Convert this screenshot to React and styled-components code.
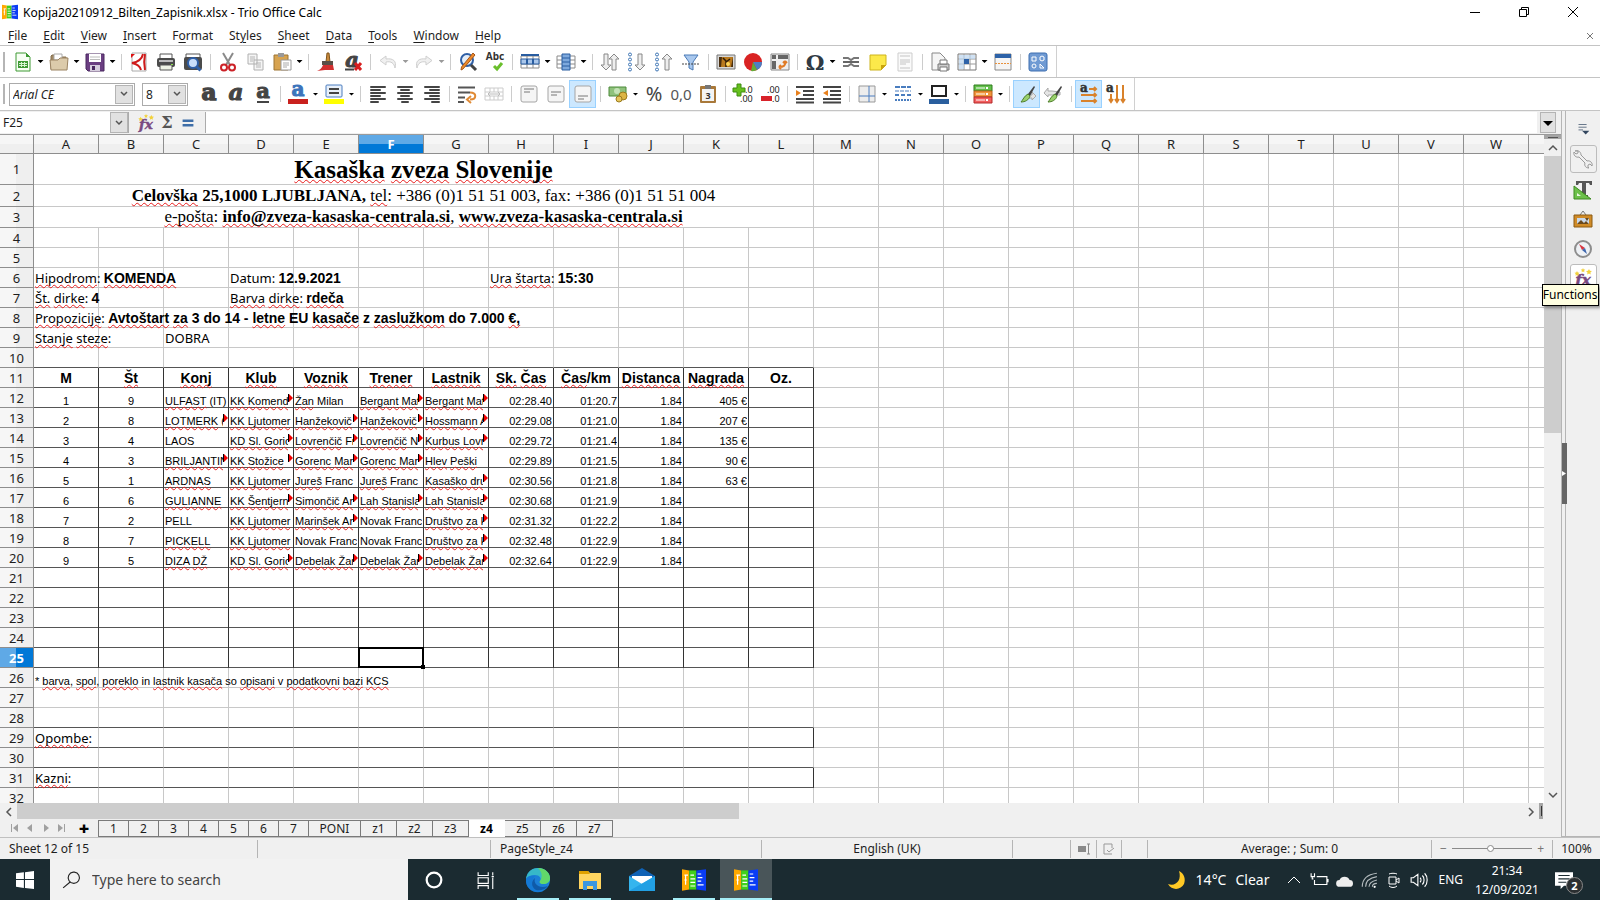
/* eslint-disable react/prop-types */
import { Fragment } from "react";
import styled, { createGlobalStyle, css } from "styled-components";

const GlobalStyle = createGlobalStyle`
  * {
    box-sizing: border-box;
  }

  body {
    margin: 0;
    font-family: "Noto Sans", "Open Sans", sans-serif;
    font-size: 12px;
    color: #1e1e1e;
    background: #fff;
  }

  button,
  input {
    margin: 0;
    padding: 0;
    border: 0;
    border-radius: 0;
    background: none;
    font: inherit;
    color: inherit;
    outline: none;
  }
`;

/* ---------- icons ---------- */

const Svg = styled.svg`
  display: block;
  flex: none;
  overflow: visible;
  width: ${(p) => p.$size || 20}px;
  height: ${(p) => p.$size || 20}px;
`;

const sheetLines = (
  <path d="M1 4h18M1 8h18M1 12h18M1 16h18M1 4v12M7 4v12M13 4v12M19 4v12" stroke="#8b8b8b" fill="none" />
);

const stripes = (widths, x = () => 2, color = "#444") =>
  widths.map((w, i) => (
    <rect key={i} x={x(w)} y={2 + i * 3} width={w} height="2" rx="1" fill={color} />
  ));

const glyph = (text, props) => (
  <text x="10" y="16" textAnchor="middle" fill="#444" fontFamily="DejaVu Serif, serif" fontWeight="bold" fontSize="18" {...props}>
    {text}
  </text>
);

const fx = (
  <>
    <text x="10" y="17" textAnchor="middle" fill="#7a4a80" stroke="#7a4a80" strokeWidth=".5" fontFamily="DejaVu Serif, serif" fontStyle="italic" fontWeight="bold" fontSize="15">
      fx
    </text>
    <path d="M4 3l.8 1.600 1.700.2-1.200 1.200.2 1.700L4 7l-1.500.7.2-1.700L1.500 4.800l1.700-.2zM10 0l.7 1.400 1.600.2-1.200 1.100.3 1.600L10 3.500l-1.400.8.3-1.600-1.200-1.100 1.600-.2zM16 1l.9 1.800 2 .3-1.500 1.400.3 2-1.700-1-1.800 1 .3-2L13 3.100l2-.3z" fill="#f2d13c" />
  </>
);

const paintbrush = (
  <>
    <path d="M17 2l-6 8 2 2 5-9z" fill="#444" />
    <path d="M11 10l2 2c-1 4-5 6-9 6 2-2 3-6 7-8z" fill="#9ad06c" stroke="#4e7d2c" />
  </>
);

const vAlign = (y) => (
  <>
    <rect x="2" y="2" width="16" height="16" rx="2" fill="#f5f5f5" stroke="#a5a5a5" />
    <path d={`M5 ${y}h10M5 ${y + 3}h6`} stroke="#777" />
  </>
);

const upArrow = (x) => (
  <path d={`M${x} 2l5 5h-3v11h-4V7h-3z`} fill="#eee" stroke="#888" />
);
const downArrow = (x) => (
  <path d={`M${x} 18l5-5h-3V2h-4v11h-3z`} fill="#eee" stroke="#888" />
);
const dots = [3, 8, 13, 18].map((y) => (
  <circle key={y} cx="3" cy={y - 0.5} r="1.500" fill="#fff" stroke="#3d74b4" />
));

const icons = {
  newDoc: (
    <>
      <path d="M3 1h10l4 4v14H3z" fill="#f7fff4" stroke="#3f9a35" />
      <path d="M13 1v4h4z" fill="#3f9a35" />
      <path d="M5 9h10v7H5z" fill="#3f9a35" />
      <path d="M6 11.500h8M6 13.500h8M8.500 10v5M11.500 10v5" stroke="#d9f5d2" />
    </>
  ),
  open: (
    <>
      <path d="M2 17V4l1-1h5l2 2h7v4" fill="#a28a66" stroke="#86704f" />
      <path d="M5 2h8v6H5z" fill="#fff" stroke="#aaa" />
      <path d="M1 8h8l2-2h8l-1 12H2z" fill="#dccbab" stroke="#9b8463" />
    </>
  ),
  save: (
    <>
      <path d="M1 2h18v17H3l-2-2z" fill="#6b3f82" stroke="#4a2860" />
      <path d="M4 2h12v8H4z" fill="#fff" />
      <path d="M5 5h10M5 7.500h10" stroke="#bbb" />
      <path d="M5 13h10v6H5z" fill="#d7cede" />
      <path d="M7 14h3v4H7z" fill="#4a2860" />
    </>
  ),
  pdf: (
    <>
      <path d="M3 1h14v18H3z" fill="#fff" stroke="#aaa" />
      <path d="M2 2h4L2 6z" fill="#d11" />
      <path d="M14 2c-1 5-5 8-11 9 5 1 8 3 9 7" fill="none" stroke="#cf1b1b" strokeWidth="2" />
      <path d="M16 2c-1 5-1 11 0 16" fill="none" stroke="#cf1b1b" strokeWidth="2" />
    </>
  ),
  print: (
    <>
      <path d="M4 2h12v6H4z" fill="#fff" stroke="#555" />
      <rect x="1" y="6" width="18" height="9" rx="2" fill="#4b4b4b" />
      <path d="M3 9h14" stroke="#bbb" strokeWidth="2" />
      <path d="M4 13h12v5H4z" fill="#eef3e4" stroke="#555" />
      <path d="M15 12h2v1h-2z" fill="#8ce04a" />
    </>
  ),
  preview: (
    <>
      <path d="M3 2h14v5H3z" fill="#fff" stroke="#555" />
      <rect x="1" y="5" width="18" height="13" rx="2" fill="#4b4b4b" />
      <circle cx="10" cy="11" r="5" fill="#c9defa" stroke="#2e5fa8" strokeWidth="2" />
      <path d="M13.500 14.500l4 4" stroke="#2e5fa8" strokeWidth="3" />
    </>
  ),
  cut: (
    <>
      <path d="M5 1l7 12M15 1L8 13" stroke="#8a8a8a" strokeWidth="2" />
      <circle cx="6" cy="15.500" r="3" fill="none" stroke="#cc2127" strokeWidth="2" />
      <circle cx="14" cy="15.500" r="3" fill="none" stroke="#cc2127" strokeWidth="2" />
    </>
  ),
  copy: (
    <>
      <path d="M3 2h9v10H3zM9 8h9v10H9z" fill="#f5f5f5" stroke="#b0b0b0" />
      <path d="M5 5h5M5 7h5M5 9h3M11 11h5M11 13h5M11 15h5" stroke="#b5b5b5" />
    </>
  ),
  paste: (
    <>
      <path d="M2 3h14v15H2z" fill="#d7a350" stroke="#9d7433" />
      <path d="M6 1h6v4H6z" fill="#999" />
      <path d="M9 8h10v10H9z" fill="#fff" stroke="#999" />
      <path d="M11 11h6M11 13h6M11 15h4" stroke="#aaa" />
    </>
  ),
  brush: (
    <>
      <path d="M11 1h2l1 9h-4z" fill="#c98a3c" stroke="#80551c" />
      <path d="M6 9h11v4H6z" fill="#5a5048" />
      <path d="M7 13h10l1 5H9L1 19c3-1 5-3 6-6z" fill="#d23030" />
    </>
  ),
  clearFmt: (
    <>
      <text x="9" y="15" textAnchor="middle" fill="#444" stroke="#444" fontFamily="DejaVu Serif, serif" fontStyle="italic" fontWeight="bold" fontSize="21">
        a
      </text>
      <path d="M2 17.500h9" stroke="#444" strokeWidth="2" />
      <path d="M12 11l6 7M18 11l-6 7" stroke="#d81f1f" strokeWidth="3" />
    </>
  ),
  undo: <path d="M8 4L2 8.500l6 4.500v-3c5-1 8 1 9 6 2-7-2-10-9-9z" fill="#f0f0f0" stroke="#cfcfcf" />,
  redo: <path d="M12 4l6 4.500L12 13v-3c-5-1-8 1-9 6-2-7 2-10 9-9z" fill="#f0f0f0" stroke="#cfcfcf" />,
  find: (
    <>
      <circle cx="9" cy="8" r="6" fill="#e3edf9" stroke="#2f5fa5" strokeWidth="2" />
      <path d="M13 13l5 5" stroke="#444" strokeWidth="3" />
      <path d="M17 3L5 17l-2 1 .5-3L15 1z" fill="#ee8a2a" stroke="#a5561a" />
    </>
  ),
  spell: (
    <>
      <text x="10" y="8" textAnchor="middle" fill="#333" fontWeight="bold" fontSize="10" fontFamily="Noto Sans, sans-serif">
        Abc
      </text>
      <path d="M9 14l3 3 5-6" fill="none" stroke="#6abf2c" strokeWidth="3" />
    </>
  ),
  row: (
    <>
      {sheetLines}
      <path d="M1 7h18v5H1z" fill="#a9c6ea" stroke="#285ca0" />
      <path d="M7 7v5M13 7v5M1 3h18" stroke="#285ca0" strokeWidth="2" />
    </>
  ),
  column: (
    <>
      {sheetLines}
      <path d="M6 2h8v16H6z" fill="#7ea9dd" stroke="#285ca0" />
      <path d="M6 6h8M6 10h8M6 14h8" stroke="#285ca0" />
    </>
  ),
  sort: (
    <>
      {downArrow(6)}
      {upArrow(14)}
    </>
  ),
  sortAsc: (
    <>
      {dots}
      {downArrow(13)}
    </>
  ),
  sortDesc: (
    <>
      {dots}
      {upArrow(13)}
    </>
  ),
  filter: (
    <>
      <path d="M3 3h14l-5 7v8l-4-2v-6z" fill="#a9c8ee" stroke="#4a7ab6" />
      <path d="M1 12h18" stroke="#444" strokeDasharray="2 1" />
    </>
  ),
  image: (
    <>
      <path d="M1 3h18v14H1z" fill="#d8d8d8" stroke="#777" />
      <path d="M3 5h14v10H3z" fill="#b97a1f" />
      <path d="M3 5h3l-1 10H3zM17 5v10h-2z" fill="#4a2f10" />
      <path d="M10 15V9L7 6M10 10l4-3" stroke="#2e1c08" strokeWidth="1.500" fill="none" />
      <circle cx="12" cy="12" r="2" fill="#ffd85c" />
    </>
  ),
  chart: (
    <>
      <circle cx="10" cy="10" r="9" fill="#d92323" />
      <path d="M10 10h9a9 9 0 0 1-5 8z" fill="#4c7fc4" />
      <path d="M10 10l4 8a9 9 0 0 1-6 1z" fill="#63ad38" />
    </>
  ),
  pivot: (
    <>
      <path d="M1 2h18v16H1z" fill="#efefef" stroke="#888" />
      <path d="M2 3h4v4H2zM8 3h10v4H8zM2 9h4v8H2z" fill="#666" />
      <path d="M15 9c1 5-2 6-6 6M15 9l-2 2M15 9l2 2M9 15l2-2M9 15l2 2" fill="none" stroke="#e07b26" strokeWidth="2" />
    </>
  ),
  omega: glyph("Ω", { fontSize: 21, y: 18, fill: "#2f3a44" }),
  link: (
    <>
      <path d="M2 6h5l3 2 3-2h5M2 14h5l3-2 3 2h5" stroke="#777" strokeWidth="2" fill="none" />
      <path d="M2 10h16" stroke="#666" strokeWidth="2" />
    </>
  ),
  note: (
    <>
      <path d="M2 3h16v10l-5 5H2z" fill="#fce94a" stroke="#cdb41c" />
      <path d="M18 13h-5v5z" fill="#c9a40e" />
    </>
  ),
  header: (
    <>
      <path d="M3 1h14v18H3z" fill="#fafafa" stroke="#cdcdcd" />
      <path d="M5 4h10M5 8h10M5 10h10M5 12h6M5 16h10" stroke="#c4c4c4" />
    </>
  ),
  printArea: (
    <>
      <path d="M2 1h8l5 5v12H2z" fill="#f5f5f5" stroke="#888" />
      <path d="M8 12h11v6H8z" fill="#ccc" stroke="#777" />
      <path d="M10 8h7v4h-7zM10 15h7v4h-7z" fill="#fff" stroke="#777" />
    </>
  ),
  freeze: (
    <>
      <path d="M1 2h18v16H1z" fill="#fff" stroke="#777" />
      <path d="M1 7h18M1 12h18M7 2v16M13 2v16" stroke="#999" />
      <path d="M2 3h16v4H7v10H2z" fill="#bcd5f0" fillOpacity=".7" />
      <path d="M7 7h5v5H7z" fill="#2d62a8" />
    </>
  ),
  split: (
    <>
      <path d="M2 2h16v16H2z" fill="#f5f5f5" stroke="#888" />
      <path d="M2 2h16v4H2z" fill="#2d62a8" />
      <path d="M2 11.500h16" stroke="#e8913c" strokeDasharray="2 1" />
    </>
  ),
  draw: (
    <>
      <rect x="1" y="1" width="18" height="18" rx="2" fill="#6f9ad3" stroke="#3e6fb0" />
      <path d="M4 5h4v4H4zM12 5l2-1 2 1v3l-2 1-2-1zM12 12v4h4z" fill="none" stroke="#fff" />
      <circle cx="6" cy="14" r="2" fill="none" stroke="#fff" />
    </>
  ),
  bold: glyph("a", { fontSize: 23, y: 16, stroke: "#444", strokeWidth: 1.5 }),
  italic: glyph("a", { fontSize: 23, y: 16, fontStyle: "italic", stroke: "#444" }),
  underline: (
    <>
      {glyph("a", { fontSize: 21, y: 14, stroke: "#444" })}
      <path d="M4 18h12" stroke="#444" strokeWidth="2" />
    </>
  ),
  fontColor: (
    <>
      {glyph("a", { fontSize: 20, y: 12, fill: "#3c74bb", stroke: "#3c74bb" })}
      <path d="M0 15h20v5H0z" fill="#c9211e" />
    </>
  ),
  highlight: (
    <>
      <rect x="2" y="1" width="16" height="12" rx="1" fill="#e8f0fa" stroke="#4a7dbf" />
      <path d="M5 5h10M5 9h10" stroke="#444" strokeWidth="2" />
      <path d="M0 15h20v5H0z" fill="#ffff00" />
    </>
  ),
  left: stripes([16, 11, 16, 11, 16, 9]),
  center: stripes([16, 10, 16, 10, 16, 8], (w) => 10 - w / 2),
  right: stripes([16, 11, 16, 11, 16, 9], (w) => 18 - w),
  wrap: (
    <>
      <path d="M1 3.500h17M1 8.500h12M1 13.500h7M1 18h6" stroke="#555" strokeWidth="2" />
      <path d="M13 8.500c7 0 7 7 0 7M14 12l-4 3.500 4 3.500" fill="none" stroke="#e08a35" strokeWidth="2" />
    </>
  ),
  merge: (
    <>
      <path d="M1 4h18v12H1zM1 8h18M1 12h18M6 4v4M10 4v4M14 4v4M6 12v4M10 12v4M14 12v4" fill="none" stroke="#ccc" />
      <path d="M4 10h12M6 8l-2 2 2 2M14 8l2 2-2 2" fill="none" stroke="#bbb" />
    </>
  ),
  top: vAlign(5),
  middle: vAlign(8),
  bottom: vAlign(12),
  currency: (
    <>
      <path d="M1 3h17v9H1z" fill="#8fc27c" stroke="#4d8a3a" />
      <circle cx="9" cy="7" r="3" fill="#c5e3b8" />
      <circle cx="15" cy="12" r="4" fill="#dcb544" stroke="#9b7b1d" />
      <circle cx="11" cy="15" r="3" fill="#e6c55c" stroke="#9b7b1d" />
    </>
  ),
  percent: glyph("%", { fontFamily: "Noto Sans, sans-serif", fontWeight: 400, fontSize: 20, y: 17 }),
  number: glyph("0,0", { fontFamily: "Noto Sans, sans-serif", fontWeight: 400, fontSize: 15, fill: "#555" }),
  date: (
    <>
      <rect x="2" y="2" width="16" height="17" rx="1" fill="#a9793a" />
      <path d="M4 5h12v12H4z" fill="#f4f4f4" />
      <path d="M7 1h6v4H7z" fill="#777" />
      <text x="10" y="15" textAnchor="middle" fontSize="9" fontWeight="bold" fill="#333" fontFamily="Noto Sans, sans-serif">
        3
      </text>
    </>
  ),
  addDec: (
    <>
      <path d="M4 0h4v4h4v4H8v4H4V8H0V4h4z" fill="#66c01e" stroke="#3f8c10" />
      <text x="12" y="9" fontSize="9" fill="#222" fontFamily="Noto Sans, sans-serif">.0</text>
      <text x="7" y="18" fontSize="9" fill="#222" fontFamily="Noto Sans, sans-serif">.00</text>
    </>
  ),
  delDec: (
    <>
      <text x="7" y="9" fontSize="9" fill="#222" fontFamily="Noto Sans, sans-serif">.00</text>
      <path d="M1 12h11v5H1z" fill="#d8222a" />
      <text x="12" y="18" fontSize="9" fill="#222" fontFamily="Noto Sans, sans-serif">.0</text>
    </>
  ),
  indentMore: (
    <>
      <path d="M1 3h18M8 7h11M8 11h11M1 15h18M1 18.500h18" stroke="#444" strokeWidth="2" />
      <path d="M1 6l5 3-5 3z" fill="#e8801c" />
    </>
  ),
  indentLess: (
    <>
      <path d="M1 3h18M8 7h11M8 11h11M1 15h18M1 18.500h18" stroke="#444" strokeWidth="2" />
      <path d="M6 6L1 9l5 3z" fill="#e8801c" />
    </>
  ),
  borders: (
    <>
      <path d="M2 2h16v16H2z" fill="#ededed" stroke="#999" />
      <path d="M12 2v16M2 12h16" stroke="#4a7dbf" />
    </>
  ),
  lineStyle: (
    <>
      <path d="M2 3h16" stroke="#4a7dbf" strokeWidth="2" strokeDasharray="5 1" />
      <path d="M2 7h16" stroke="#4a7dbf" strokeDasharray="4 1" />
      <path d="M2 11h16" stroke="#4a7dbf" strokeWidth="2" strokeDasharray="4 2" />
      <path d="M2 16h16" stroke="#4a7dbf" strokeWidth="2" strokeDasharray="2 1" />
    </>
  ),
  borderColor: (
    <>
      <path d="M3 2h14v10H3z" fill="#fff" stroke="#222" strokeWidth="2" />
      <path d="M0 15h20v5H0z" fill="#2a5f9e" />
    </>
  ),
  conditional: (
    <>
      <path d="M1 1h18v6H1z" fill="#63bf4b" stroke="#2f7c1d" />
      <path d="M1 7h18v6H1z" fill="#f0953a" stroke="#b9601a" />
      <path d="M1 13h18v6H1z" fill="#f25f5f" stroke="#b52b2b" />
      <path d="M3 4h9M3 10h9M3 16h9" stroke="#fff" />
      <path d="M14 3v2M14 9v2M14 15v2" stroke="#fff" strokeWidth="2" />
    </>
  ),
  styleBrush: (
    <>
      <path d="M10 11h5v-3l4 4-4 4v-2h-6z" fill="#e5e5e5" stroke="#aaa" />
      {paintbrush}
    </>
  ),
  styleBrush2: (
    <>
      <path d="M8 7H4V4L0 9l4 4v-2h12V8z" fill="#e5e5e5" stroke="#aaa" />
      {paintbrush}
    </>
  ),
  ltr: (
    <>
      <text x="1" y="8" fontSize="12" fontWeight="bold" fill="#333" stroke="#333" strokeWidth=".5" fontFamily="DejaVu Serif, serif">a</text>
      <path d="M10 5h7M2 11h15M2 17h15M15 3l2 2-2 2M15 9l2 2-2 2M15 15l2 2-2 2" fill="none" stroke="#d9822b" strokeWidth="2" />
    </>
  ),
  ttb: (
    <>
      <text x="0" y="8" fontSize="12" fontWeight="bold" fill="#333" stroke="#333" strokeWidth=".5" fontFamily="DejaVu Serif, serif">a</text>
      <path d="M5 10v8M11 1v17M17 1v17M3 15l2 3 2-3M9 15l2 3 2-3M15 15l2 3 2-3" fill="none" stroke="#d9822b" strokeWidth="2" />
    </>
  ),
  fx,
  sum: glyph("Σ", { fontSize: 18, fill: "#555" }),
  equals: <path d="M4 7.500h12M4 12.500h12" stroke="#3e6ea8" strokeWidth="3" />,
  menu: (
    <>
      <path d="M5 5h9M5 8h9M5 11h5" stroke="#5a6b80" />
      <path d="M9 12h8l-4 4z" fill="#33475f" />
    </>
  ),
  wrench: (
    <path
      d="M2 2c2-1 6 0 6 4l6 6c3-1 6 2 5 5l-2-2-2 1v2l1 1c-3 0-5-2-4-5L6 8C3 9 0 6 1 3l2 2 2-1V2z"
      fill="#f0f0f0"
      stroke="#9a9a9a"
    />
  ),
  text: (
    <>
      <path d="M3 1h16v4h-2l-1-2h-3v12h2v2H8v-2h1V3H6L5 5H3z" fill="#555" />
      <path d="M1 6v13h17z" fill="#6cc04a" stroke="#3c8a20" />
      <path d="M4 13v3h4z" fill="#eaf7e3" />
    </>
  ),
  gallery: (
    <>
      <path d="M7 5l3-4 3 4" fill="none" stroke="#777" />
      <path d="M1 5h18v12H1z" fill="#d08b27" stroke="#8a5a14" />
      <path d="M4 8h12v6H4z" fill="#c9d8ea" />
      <path d="M4 14l4-4 3 3 2-2 3 3zM12 8l2 3 2-3z" fill="#6b4a1e" />
    </>
  ),
  compass: (
    <>
      <circle cx="10" cy="10" r="8" fill="#eef1f5" stroke="#8d8d8d" strokeWidth="2" />
      <path d="M6 5l6 4-3 2z" fill="#d8343f" />
      <path d="M14 15l-5-4 3-2z" fill="#3e67ae" />
    </>
  ),
  trio: (
    <>
      <path d="M0 1l6 1v16l-6 1z" fill="#ffa800" />
      <path d="M6 2h6v16H6z" fill="#41d01c" />
      <path d="M12 2l8-1v18l-8-1z" fill="#0a3cf5" />
      <path d="M2 6h3M2 10h2M3 6v8M7 6h3M7 9h4M7 12h4M7 15h4M13 5h3M13 8h4M13 11h3M13 14h5" stroke="#fff" fill="none" />
    </>
  ),
};

function Icon({ name, size, title }) {
  return (
    <Svg $size={size} viewBox="0 0 20 20" role="img" aria-label={title || name}>
      {icons[name]}
    </Svg>
  );
}

/* ---------- window frame ---------- */

const Window = styled.div`
  display: flex;
  flex-direction: column;
  height: 100vh;
  overflow: hidden;
`;

const TitleBar = styled.header`
  display: flex;
  align-items: center;
  height: 24px;
  padding: 0 3px 0 2px;
`;

const Title = styled.h1`
  flex: 1;
  margin: 0 0 0 5px;
  font-size: 12px;
  font-weight: 400;
  color: #000;
`;

const WindowButton = styled.button`
  display: grid;
  place-items: center;
  width: 49px;
  height: 24px;
`;

const MenuBar = styled.nav`
  display: flex;
  align-items: center;
  gap: 16px;
  height: 22px;
  padding: 2px 5px 0 8px;
  border-bottom: 1px solid #c4c4c4;
`;

const MenuItem = styled.button`
  line-height: 19px;
`;

const Accel = styled.u`
  text-underline-offset: 2px;
`;

const DocClose = styled.button`
  display: grid;
  place-items: center;
  width: 10px;
  height: 18px;
  margin-left: auto;
`;

const ToolbarRow = styled.div`
  display: flex;
  height: ${(p) => p.$height}px;
  border-bottom: 1px solid #c4c4c4;
`;

const Toolbar = styled.div`
  display: flex;
  align-items: center;
  padding: 0 5px 0 9px;
  border-right: 1px solid #d0d0d0;
  background: linear-gradient(#b5b5b5, #b5b5b5) 3px center / 2px 20px no-repeat;
`;

const ToolButton = styled.button`
  display: grid;
  place-items: center;
  width: 27px;
  height: 28px;
  border: 1px solid ${(p) => (p.$active ? "#99d1ff" : "transparent")};
  background: ${(p) => (p.$active ? "#cce8ff" : "none")};
`;

const Caret = styled.button`
  width: 9px;
  height: 28px;

  &::before {
    content: "";
    display: block;
    margin: 0 auto;
    width: 6px;
    height: 3px;
    background: ${(p) => (p.$muted ? "#9a9a9a" : "#000")};
    clip-path: polygon(0 0, 100% 0, 50% 100%);
  }
`;

const Separator = styled.span`
  width: 8px;
  height: 16px;
  background: linear-gradient(#ccc, #ccc) center / 1px 100% no-repeat;
`;

const Combo = styled.label`
  display: flex;
  align-items: stretch;
  width: ${(p) => p.$width}px;
  height: 23px;
  margin-right: 7px;
  padding: 1px;
  border: 1px solid #ababab;
  background: #fff;

  input {
    flex: 1;
    min-width: 0;
    padding-left: 2px;
    font-style: ${(p) => (p.$italic ? "italic" : "normal")};
  }
`;

const DropButton = styled.button`
  display: grid;
  place-items: center;
  width: 18px;
  border: 1px solid #b4b4b4;
  background: #e1e1e1;
`;

const Chevron = ({ d = "M2 3l3 3 3-3", size = 10, stroke = "#555" }) => (
  <Svg $size={size} viewBox="0 0 10 10" aria-hidden="true">
    <path d={d} fill="none" stroke={stroke} strokeWidth="1.500" />
  </Svg>
);

// "v" after a name adds a drop-down caret, "|" is a separator
const standardTools =
  "newDoc v open v save v | pdf print preview | cut copy paste v | brush clearFmt | undo v redo v | find spell | row v column v | sort sortAsc sortDesc filter | image chart pivot | omega v link note header | printArea freeze v split | draw".split(" ");
const formatTools =
  "bold italic underline | fontColor v highlight v | left center right | wrap merge | top middle bottom | currency v percent number date | addDec delDec | indentMore indentLess | borders v lineStyle v borderColor v | conditional v | styleBrush styleBrush2 | ltr ttb".split(" ");
const activeTools = ["bottom", "styleBrush", "ltr"];

function Tools({ items }) {
  return items.map((item, i) => {
    if (item === "|") return <Separator key={i} />;
    if (item === "v") {
      const of = items[i - 1];
      return <Caret key={i} aria-label={`${of} options`} $muted={of === "undo" || of === "redo"} />;
    }
    return (
      <ToolButton key={i} aria-label={item} $active={activeTools.includes(item)}>
        <Icon name={item} />
      </ToolButton>
    );
  });
}

/* ---------- work area ---------- */

const Workspace = styled.div`
  display: flex;
  flex: 1;
  min-height: 0;
  background: #f0f0f0;
`;

const Document = styled.main`
  display: flex;
  flex-direction: column;
  flex: 1;
  min-width: 0;
`;

const FormulaBar = styled.div`
  display: flex;
  align-items: stretch;
  height: 24px;
  padding: 1px 0;
  border-bottom: 1px solid #9b9b9b;
`;

const NameBox = styled.label`
  display: flex;
  width: 129px;
  background: #fff;
  border-right: 1px solid #ababab;

  input {
    flex: 1;
    min-width: 0;
    padding-left: 3px;
  }
`;

const FormulaTools = styled.div`
  display: flex;
  align-items: center;
  justify-content: center;
  width: 77px;
  border-right: 1px solid #ababab;

  button {
    display: grid;
    place-items: center;
    width: 21px;
  }
`;

const FormulaInput = styled.input`
  flex: 1;
  min-width: 0;
  background: #fff;
`;

const ExpandButton = styled.button`
  display: grid;
  place-items: center;
  width: 16px;
  margin: 0 5px 0 3px;
  border: 1px solid #b4b4b4;
  background: #e1e1e1;
`;

const SheetArea = styled.div`
  display: flex;
  flex: 1;
  min-height: 0;
`;

const SheetView = styled.div`
  flex: 1;
  min-width: 0;
  overflow: hidden;
  background: #fff;
`;

const Grid = styled.table`
  width: 100%;
  table-layout: fixed;
  border-collapse: separate;
  border-spacing: 0;
`;

const headerCell = css`
  padding: 0;
  font-size: 13px;
  line-height: 18px;
  font-weight: ${(p) => (p.$selected ? 700 : 400)};
  color: ${(p) => (p.$selected ? "#fff" : "#1e1e1e")};
  border-right: 1px solid #8e8e8e;
  border-bottom: 1px solid #8e8e8e;
`;

const ColumnHeader = styled.th`
  ${headerCell}
  height: 19px;
  background: ${(p) =>
    p.$selected
      ? "linear-gradient(#5fa9e6 50%, #0078d7 50%)"
      : "linear-gradient(#f6f6f6 50%, #efefef 50%)"};
`;

const RowHeader = styled.th`
  ${headerCell}
  background: ${(p) =>
    p.$selected
      ? "linear-gradient(90deg, #5fa9e6 50%, #0078d7 50%)"
      : "linear-gradient(90deg, #f6f6f6 50%, #efefef 50%)"};
`;

const Row = styled.tr`
  height: ${(p) => p.$height}px;
`;

const textStyles = {
  heading: css`
    font: 700 25px/28px "Liberation Serif", serif;
    text-align: center;
  `,
  address: css`
    font: 400 17px/20px "Liberation Serif", serif;
    text-align: center;
  `,
  label: css`
    font-size: 13px;
    line-height: 18px;
  `,
  columnTitle: css`
    font: 700 14px/17px "Liberation Sans", sans-serif;
    text-align: center;
  `,
  entry: css`
    font: 400 11px/12px "Liberation Sans", sans-serif;
  `,
};

const Cell = styled.td`
  position: ${(p) => (p.$anchor ? "relative" : "static")};
  padding: 0 1px;
  white-space: nowrap;
  vertical-align: bottom;
  color: #000;
  border-right: 1px solid ${(p) => (p.$inkRight ? "#333" : "#c8c8c8")};
  border-bottom: 1px solid ${(p) => (p.$inkBottom ? "#555" : "#c8c8c8")};
  ${(p) => textStyles[p.$kind]}
  ${(p) => p.$align && `text-align: ${p.$align};`}
`;

const Strong = styled.b`
  font-family: "Liberation Sans", sans-serif;
  font-size: 14px;
  line-height: 16px;
`;

const Misspelled = styled.span`
  text-decoration: underline wavy #e81c1c 1px;
  text-decoration-skip-ink: none;
  text-underline-offset: 1px;
`;

const Clip = styled.div`
  margin-right: ${(p) => (p.$cut ? 4 : 0)}px;
  overflow-x: clip;
  overflow-y: visible;
`;

const OverflowMark = styled.span`
  position: absolute;
  top: 6px;
  right: 0;
  width: 5px;
  height: 8px;
  background: #f00000;
  border-left: 1px solid #000;
  clip-path: polygon(0 0, 20% 0, 100% 50%, 20% 100%, 0 100%);
`;

const CellCursor = styled.span`
  position: absolute;
  inset: -1px;
  border: 2px solid #000;

  &::after {
    content: "";
    position: absolute;
    right: -3px;
    bottom: -3px;
    width: 4px;
    height: 4px;
    background: #000;
  }
`;

const ScrollColumn = styled.div`
  display: flex;
  flex-direction: column;
  width: 17px;

  &::before {
    content: "";
    height: 4px;
    background: linear-gradient(#555, #555) center / 10px 1px no-repeat #a5a5a5;
  }
`;

const ScrollRow = styled.div`
  display: flex;
  height: 16px;
  padding-right: 18px;

  &::after {
    content: "";
    width: 4px;
    background: linear-gradient(#333, #333) center / 1px 10px no-repeat #a5a5a5;
  }
`;

const ScrollButton = styled.button`
  display: grid;
  place-items: center;
  width: 17px;
  height: 17px;
`;

const Track = styled.div`
  display: flex;
  flex-direction: inherit;
  flex: 1;
`;

const Thumb = styled.div`
  flex: 0 0 ${(p) => p.$share}%;
  background: #cdcdcd;
`;

const TabBar = styled.div`
  display: flex;
  align-items: center;
  height: 18px;
  padding-left: 6px;
`;

const TabNav = styled.button`
  display: grid;
  place-items: center;
  width: 16px;
  height: 18px;
`;

const AddSheet = styled.button`
  width: 28px;
  font-size: 18px;
  line-height: 16px;
  font-weight: 900;
  color: #000;
`;

const Tabs = styled.div`
  display: flex;
  border-left: 1px solid #7a7a7a;
`;

const Tab = styled.button`
  width: ${(p) => p.$width}px;
  height: 17px;
  line-height: 15px;
  border: 1px solid #7a7a7a;
  border-left: 0;
  ${(p) =>
    p.$active &&
    css`
      font-weight: 700;
      color: #000;
      background: #fff;
      border-color: #fff;
    `}
`;

const Splitter = styled.div`
  display: flex;
  align-items: center;
  width: 5px;
  border: 1px solid #b5b5b5;
  border-top: 0;
`;

const SplitterGrip = styled.button`
  display: grid;
  place-items: center;
  width: 5px;
  height: 61px;
  background: #666;
`;

const Sidebar = styled.aside`
  display: flex;
  flex-direction: column;
  align-items: center;
  gap: 1px;
  width: 34px;
  padding-top: 2px;
  border-bottom: 1px solid #b5b5b5;
`;

const SideButton = styled.button`
  position: relative;
  display: grid;
  place-items: center;
  width: 27px;
  height: ${(p) => (p.$tall ? 31 : 28)}px;
  border: 1px solid ${(p) => (p.$framed ? "#bcbcbc" : "transparent")};
  border-radius: 3px;
  background: ${(p) => (p.$hovered ? "#fff" : "none")};
`;

const Tooltip = styled.span`
  position: absolute;
  top: 19px;
  right: -3px;
  line-height: 20px;
  font-size: 12px;
  color: #000;
  background: #ffffe1;
  border: 1px solid #000;
  box-shadow: 2px 2px 3px rgba(0, 0, 0, 0.4);
`;

/* ---------- status bar ---------- */

const StatusBar = styled.footer`
  display: grid;
  grid-template-columns: 258fr 233fr 271fr 251fr 58fr 26fr 25fr 26fr 284fr 121fr 47fr;
  align-items: center;
  height: 22px;
  border-top: 1px solid #c0c0c0;
  background: #f0f0f0;
`;

const StatusField = styled.div`
  display: flex;
  align-items: center;
  justify-content: ${(p) => (p.$start ? "flex-start" : "center")};
  min-width: 0;
  height: 18px;
  padding-left: ${(p) => (p.$start ? 9 : 0)}px;
  white-space: nowrap;
  border-right: 1px solid #b5b5b5;

  &:last-child {
    border: 0;
  }
`;

const ZoomField = styled(StatusField)`
  gap: 5px;
  padding: 0 8px;
  color: #777;
`;

const ZoomSlider = styled.input`
  flex: 1;
  min-width: 0;
  height: 12px;
  appearance: none;
  background: linear-gradient(#8a8a8a, #8a8a8a) center / 100% 1px no-repeat;

  &::-webkit-slider-thumb {
    appearance: none;
    width: 7px;
    height: 7px;
    border: 1px solid #8a8a8a;
    border-radius: 50%;
    background: #fff;
  }
`;

/* ---------- task bar ---------- */

const TaskBar = styled.nav`
  display: flex;
  height: 41px;
  color: #fff;
  background: #1b2b31;
`;

const StartButton = styled.button`
  display: grid;
  place-items: center;
  width: 50px;
`;

const Search = styled.label`
  display: flex;
  align-items: center;
  gap: 12px;
  width: 358px;
  padding-left: 12px;
  background: #f2f2f2;

  input {
    flex: 1;
    min-width: 0;
    font-size: 14px;
  }

  input::placeholder {
    color: #444;
    opacity: 1;
  }
`;

const AppButton = styled.button`
  display: grid;
  place-items: center;
  width: 52px;
  background-color: ${(p) => (p.$active ? "#495559" : "transparent")};
  ${(p) =>
    p.$running &&
    css`
      background-image: linear-gradient(#a6eef7, #a6eef7);
      background-position: center bottom;
      background-size: ${p.$active ? "100%" : "42px"} 2px;
      background-repeat: no-repeat;
    `}
`;

const Apps = styled.div`
  display: flex;
`;

const Tray = styled.div`
  display: flex;
  align-items: center;
  margin-left: auto;
  padding-right: 17px;
`;

const Weather = styled.button`
  display: flex;
  align-items: center;
  gap: 9px;
  margin-right: 12px;
  font-size: 14px;
`;

const TrayButton = styled.button`
  display: grid;
  place-items: center;
  width: 25px;
  height: 30px;
`;

const Language = styled.button`
  margin: 0 12px 0 7px;
`;

const Clock = styled.button`
  width: 64px;
  margin-right: 16px;
  line-height: 19px;
  text-align: center;
`;

const Notifications = styled.button`
  position: relative;
  width: 28px;
  height: 28px;
`;

const Badge = styled.span`
  position: absolute;
  right: 0;
  bottom: 0;
  width: 17px;
  height: 17px;
  border: 1px solid #8a8a8a;
  border-radius: 50%;
  line-height: 15px;
  font-size: 11px;
  font-weight: 700;
  background: #2b2f31;
`;

/* ---------- data ---------- */

const columns = "ABCDEFGHIJKLMNOPQRSTUVWX".split("");
const printed = 12; // columns A to L hold the report

const titles = ["M", "~Št~", "~Konj~", "~Klub~", "~Voznik~", "~Trener~", "~Lastnik~", "~Sk.~ ~Čas~", "~Čas~/km", "~Distanca~", "~Nagrada~", "Oz."];

// a trailing ">" marks text that is longer than its cell
const results = [
  ["1", "9", "~ULFAST~ (IT)", "~KK Komend~>", "~Žan~ Milan", "~Bergant Mat~>", "~Bergant Mat~>", "02:28.40", "01:20.7", "1.84", "405 €"],
  ["2", "8", "~LOTMERK~ (>", "~KK Ljutomer~", "~Hanžekovič~>", "~Hanžekovič~>", "~Hossmann~ A>", "02:29.08", "01:21.0", "1.84", "207 €"],
  ["3", "4", "LAOS", "~KD Sl. Goric~>", "~Lovrenčič~ Fr>", "~Lovrenčič~ N>", "~Kurbus Lovr~>", "02:29.72", "01:21.4", "1.84", "135 €"],
  ["4", "3", "~BRILJANTIN~>", "~KK Stožice~>", "~Gorenc Mark~>", "~Gorenc Mark~>", "~Hlev~ ~Peški~", "02:29.89", "01:21.5", "1.84", "90 €"],
  ["5", "1", "~ARDNAS~", "~KK Ljutomer~", "~Jureš~ Franc", "~Jureš~ Franc", "~Kasaško dru~>", "02:30.56", "01:21.8", "1.84", "63 €"],
  ["6", "6", "~GULIANNE~", "~KK Šentjern~>", "~Simončič An~>", "~Lah Stanisla~>", "~Lah Stanisla~>", "02:30.68", "01:21.9", "1.84"],
  ["7", "2", "PELL", "~KK Ljutomer~", "~Marinšek An~>", "Novak Franc", "~Društvo za k~>", "02:31.32", "01:22.2", "1.84"],
  ["8", "7", "~PICKELL~", "~KK Ljutomer~", "Novak Franc", "Novak Franc", "~Društvo za k~>", "02:32.48", "01:22.9", "1.84"],
  ["9", "5", "~DIZA~ ~DŽ~", "~KD Sl. Goric~>", "~Debelak Žan~>", "~Debelak Žan~>", "~Debelak Žan~>", "02:32.64", "01:22.9", "1.84"],
];

// words between tildes get the spelling underline
const spell = (text) =>
  text.split("~").map((part, i) =>
    i % 2 ? <Misspelled key={i}>{part}</Misspelled> : <Fragment key={i}>{part}</Fragment>
  );

const strong = (text) => <Strong>{spell(text)}</Strong>;

const merged = {
  1: { height: 31, kind: "heading", content: spell("~Kasaška~ ~zveza~ ~Slovenije~") },
  2: {
    height: 22,
    kind: "address",
    content: (
      <>
        <b>{spell("~Celovška~ 25,1000 LJUBLJANA,")}</b> {spell("~tel~: +386 (0)1 51 51 003, fax: +386 (0)1 51 51 004")}
      </>
    ),
  },
  3: {
    height: 21,
    kind: "address",
    content: (
      <>
        {spell("~e-pošta~: ")}
        <b>{spell("~info@zveza-kasaska-centrala.si~")}</b>, <b>{spell("~www.zveza-kasaska-centrala.si~")}</b>
      </>
    ),
  },
};

const labels = {
  A6: <>{spell("~Hipodrom~: ")}{strong("~KOMENDA~")}</>,
  D6: <>Datum: {strong("12.9.2021")}</>,
  H6: <>{spell("~Ura~ ~štarta~: ")}{strong("15:30")}</>,
  A7: <>{spell("~Št.~ ~dirke~: ")}{strong("4")}</>,
  D7: <>{spell("~Barva~ ~dirke~: ")}{strong("~rdeča~")}</>,
  A8: (
    <>
      {spell("~Propozicije~: ")}
      {strong("~Avtoštart~ ~za~ 3 do 14 - ~letne~ EU ~kasače~ z ~zaslužkom~ do 7.000 ~€,~")}
    </>
  ),
  A9: spell("~Stanje~ ~steze~:"),
  C9: "DOBRA",
  A29: spell("~Opombe~:"),
  A31: spell("~Kazni~:"),
};

const footnote = "* ~barva~, ~spol~, ~poreklo~ in ~lastnik~ ~kasača~ so ~opisani~ v ~podatkovni~ ~bazi~ ~KCS~";

const tabs = ["1", "2", "3", "4", "5", "6", "7", "PONI", "z1", "z2", "z3", "z4", "z5", "z6", "z7"];

function tabWidth(name) {
  if (name === "PONI") return 52;
  return name.startsWith("z") ? 36 : 30;
}

function SheetCell({ row, col }) {
  const inReport = col < printed;
  const inTable = inReport && row >= 11 && row <= 25;
  const boxed = inReport && (row === 29 || row === 31);
  const ink = {
    $inkRight: inTable || (boxed && col === printed - 1),
    $inkBottom: inTable || (inReport && [10, 28, 29, 30, 31].includes(row)),
  };

  if (row === 11 && inReport)
    return (
      <Cell {...ink} $kind="columnTitle">
        {spell(titles[col])}
      </Cell>
    );

  const entry = results[row - 12]?.[col];
  if (entry) {
    const cut = entry.endsWith(">");
    const align = col < 2 ? "center" : col > 6 ? "right" : "left";
    return (
      <Cell {...ink} $kind="entry" $align={align} $anchor={cut}>
        <Clip $cut={cut}>{spell(entry.replace(">", ""))}</Clip>
        {cut && <OverflowMark />}
      </Cell>
    );
  }

  if (row === 26 && col === 0)
    return (
      <Cell {...ink} $kind="entry">
        {spell(footnote)}
      </Cell>
    );

  const current = row === 25 && columns[col] === "F";
  return (
    <Cell {...ink} $kind="label" $anchor={current}>
      {labels[columns[col] + row]}
      {current && <CellCursor />}
    </Cell>
  );
}

function Sheet() {
  return (
    <Grid>
      <colgroup>
        <col style={{ width: 34 }} />
        {columns.map((c) => (
          <col key={c} style={{ width: 65 }} />
        ))}
      </colgroup>
      <thead>
        <tr>
          <ColumnHeader aria-label="Select all" />
          {columns.map((c) => (
            <ColumnHeader key={c} scope="col" $selected={c === "F"}>
              {c}
            </ColumnHeader>
          ))}
        </tr>
      </thead>
      <tbody>
        {Array.from({ length: 32 }, (_, i) => i + 1).map((row) => {
          const wide = merged[row];
          return (
            <Row key={row} $height={wide ? wide.height : 20}>
              <RowHeader scope="row" $selected={row === 25}>
                {row}
              </RowHeader>
              {wide && (
                <Cell colSpan={printed} $kind={wide.kind}>
                  {wide.content}
                </Cell>
              )}
              {columns.map((c, col) =>
                wide && col < printed ? null : <SheetCell key={c} row={row} col={col} />
              )}
            </Row>
          );
        })}
      </tbody>
    </Grid>
  );
}

function Line({ d, size = 16, stroke = "#fff", box = 16, children }) {
  return (
    <Svg $size={size} viewBox={`0 0 ${box} ${box}`} aria-hidden="true">
      {d && <path d={d} fill="none" stroke={stroke} />}
      {children}
    </Svg>
  );
}

function WindowsTaskBar() {
  return (
    <TaskBar aria-label="Taskbar">
      <StartButton aria-label="Start">
        <Line size={18}>
          <path d="M0 2l7-1v6H0zM8 1l8-1v7H8zM0 8h7v7l-7-1zM8 8h8v8l-8-1z" fill="#fff" />
        </Line>
      </StartButton>
      <Search>
        <Line size={18} stroke="#222" d="M11 1a5 5 0 1 1-1 0zM7 10l-6 5" />
        <input type="text" aria-label="Search" placeholder="Type here to search" />
      </Search>
      <Apps>
        <AppButton aria-label="Cortana">
          <Line size={18}>
            <circle cx="8" cy="8" r="6.500" fill="none" stroke="#fff" strokeWidth="2" />
          </Line>
        </AppButton>
        <AppButton aria-label="Task view">
          <Line size={18} d="M1 1v3h9V1M1 6h9v5H1zM1 16v-3h9v3M14 1v3M14 6v10M13 5h2" />
        </AppButton>
        <AppButton $running aria-label="Edge">
          <Line size={26} box={26}>
            <circle cx="13" cy="13" r="12" fill="#1b7fd6" />
            <path d="M1 12C2 4 8 1 13 1c7 0 12 5 12 10 0 4-3 6-7 6-3 0-4-2-3-3 2-3-1-6-5-6-4 0-7 1-9 4z" fill="#36b8c8" />
            <path d="M13 1c8 0 12 6 12 10 0 4-3 6-7 6-3 0-4-2-3-3 3-4 2-9-2-13z" fill="#62d86a" />
            <path d="M10 9c-5 5-3 14 8 15C10 28 0 22 1 12c2-3 5-4 9-3z" fill="#1479d4" />
            <path d="M10 11c-2 6 4 11 13 8-3 4-8 5-12 4-5-3-5-9-1-12z" fill="#0f5aa8" />
          </Line>
        </AppButton>
        <AppButton $running aria-label="File Explorer">
          <Line size={24} box={24}>
            <path d="M1 3h9l2 2h11v16H1z" fill="#ffd560" />
            <path d="M1 3h9l2 3H1z" fill="#e0a100" />
            <path d="M5 13h14v9h-4v-4H9v4H5z" fill="#3a97e0" />
          </Line>
        </AppButton>
        <AppButton aria-label="Mail">
          <Line size={26} box={26}>
            <path d="M0 9l13-8 13 8v15H0z" fill="#0f62b5" />
            <path d="M3 9h20v8H3z" fill="#fff" />
            <path d="M0 9l13 8 13-8v15H0z" fill="#35b5ee" />
            <path d="M0 24l26-15v15z" fill="#22a0e4" />
          </Line>
        </AppButton>
        <AppButton $running aria-label="Trio Office">
          <Icon name="trio" size={24} />
        </AppButton>
        <AppButton $running $active aria-label="Trio Office Calc">
          <Icon name="trio" size={24} />
        </AppButton>
      </Apps>
      <Tray>
        <Weather>
          <Line size={20} box={20}>
            <path d="M12 1c5 2 7 8 5 13-3 6-12 7-16 0 8 3 14-4 11-13z" fill="#ffc925" />
          </Line>
          <span>14°C</span>
          <span>Clear</span>
        </Weather>
        <TrayButton aria-label="Show hidden icons">
          <Line d="M2 11l6-6 6 6" />
        </TrayButton>
        <TrayButton aria-label="Battery">
          <Line size={18} d="M6 5h9v7H4V8M16 7v3M1 2v3h3V2M2 5v2h1" />
        </TrayButton>
        <TrayButton aria-label="Cloud storage">
          <Line size={18}>
            <path d="M4 14a3 3 0 0 1 0-6 5 5 0 0 1 9 0 3 3 0 0 1 0 6z" fill="#eee" />
          </Line>
        </TrayButton>
        <TrayButton aria-label="Network">
          <Line size={18} stroke="#b5bcbf" d="M2 14C2 7 7 3 15 2M5 14c0-5 4-8 10-9M8 14c0-3 3-5 7-6M11 14c0-2 2-3 4-3">
            <circle cx="13" cy="14" r="1" fill="#fff" />
          </Line>
        </TrayButton>
        <TrayButton aria-label="Meet now">
          <Line d="M3 5h7v7H3zM10 8l3-2v5l-3-2M3 2c2-1 6-1 8 0M3 14c2 2 6 2 8 0" />
        </TrayButton>
        <TrayButton aria-label="Volume">
          <Line size={18} d="M1 6v4h2l4 3V3L3 6zM9 6c1 1 1 3 0 4M11 4c2 2 2 6 0 8M13 2c3 3 3 9 0 12" />
        </TrayButton>
        <Language>ENG</Language>
        <Clock>
          21:34
          <br />
          12/09/2021
        </Clock>
        <Notifications aria-label="Notifications">
          <Line size={18}>
            <path d="M0 1h16v12H8l-3 3v-3H0z" fill="#fff" />
            <path d="M3 4h10M3 7h10M3 10h7" stroke="#1b2b31" />
          </Line>
          <Badge>2</Badge>
        </Notifications>
      </Tray>
    </TaskBar>
  );
}

const menus = ["File", "Edit", "View", "Insert", "Format", "Styles", "Sheet", "Data", "Tools", "Window", "Help"];

function MenuLabel({ name }) {
  const at = { Format: 1, Styles: 2 }[name] || 0;
  return (
    <>
      {name.slice(0, at)}
      <Accel>{name[at]}</Accel>
      {name.slice(at + 1)}
    </>
  );
}

function App() {
  return (
    <Window>
      <GlobalStyle />
      <TitleBar>
        <Icon name="trio" size={16} />
        <Title>Kopija20210912_Bilten_Zapisnik.xlsx - Trio Office Calc</Title>
        <WindowButton aria-label="Minimize">
          <Line size={12} box={12} stroke="#000" d="M1 6.500h10" />
        </WindowButton>
        <WindowButton aria-label="Restore">
          <Line size={12} box={12} stroke="#000" d="M1.500 3.500h7v7h-7zM3.500 3V1.500h7v7H9" />
        </WindowButton>
        <WindowButton aria-label="Close">
          <Line size={12} box={12} stroke="#000" d="M1 1l10 10M11 1L1 11" />
        </WindowButton>
      </TitleBar>
      <MenuBar>
        {menus.map((name) => (
          <MenuItem key={name}>
            <MenuLabel name={name} />
          </MenuItem>
        ))}
        <DocClose aria-label="Close document">
          <Line size={8} box={8} stroke="#777" d="M1 1l6 6M7 1L1 7" />
        </DocClose>
      </MenuBar>
      <ToolbarRow $height={32}>
        <Toolbar>
          <Tools items={standardTools} />
        </Toolbar>
      </ToolbarRow>
      <ToolbarRow $height={33}>
        <Toolbar>
          <Combo $width={126} $italic>
            <input type="text" aria-label="Font name" defaultValue="Arial CE" />
            <DropButton aria-label="Font list">
              <Chevron />
            </DropButton>
          </Combo>
          <Combo $width={46}>
            <input type="text" aria-label="Font size" defaultValue="8" />
            <DropButton aria-label="Size list">
              <Chevron />
            </DropButton>
          </Combo>
          <Tools items={formatTools} />
        </Toolbar>
      </ToolbarRow>

      <Workspace>
        <Document>
          <FormulaBar>
            <NameBox>
              <input type="text" aria-label="Name box" defaultValue="F25" />
              <DropButton aria-label="Named ranges">
                <Chevron />
              </DropButton>
            </NameBox>
            <FormulaTools>
              {["fx", "sum", "equals"].map((name) => (
                <button key={name} aria-label={name}>
                  <Icon name={name} size={18} />
                </button>
              ))}
            </FormulaTools>
            <FormulaInput type="text" aria-label="Formula" />
            <ExpandButton aria-label="Expand formula bar">
              <Line size={10} box={10}>
                <path d="M0 3h10L5 8z" fill="#000" />
              </Line>
            </ExpandButton>
          </FormulaBar>
          <SheetArea>
            <SheetView>
              <Sheet />
            </SheetView>
            <ScrollColumn>
              <ScrollButton aria-label="Scroll up">
                <Chevron d="M1 7l4-4 4 4" />
              </ScrollButton>
              <Track>
                <Thumb $share={44} />
              </Track>
              <ScrollButton aria-label="Scroll down">
                <Chevron d="M1 3l4 4 4-4" />
              </ScrollButton>
            </ScrollColumn>
          </SheetArea>
          <ScrollRow>
            <ScrollButton aria-label="Scroll left">
              <Chevron d="M7 1L3 5l4 4" />
            </ScrollButton>
            <Track>
              <Thumb $share={48} />
            </Track>
            <ScrollButton aria-label="Scroll right">
              <Chevron d="M3 1l4 4-4 4" />
            </ScrollButton>
          </ScrollRow>
          <TabBar>
            {[
              ["First sheet", "M2 1v8h1V1zM9 1v8L4 5z"],
              ["Previous sheet", "M7 1v8L2 5z"],
              ["Next sheet", "M3 1v8l5-4z"],
              ["Last sheet", "M1 1v8l5-4zM7 1v8h1V1z"],
            ].map(([label, d]) => (
              <TabNav key={label} aria-label={label}>
                <Line size={10} box={10}>
                  <path d={d} fill="#a0a0a0" />
                </Line>
              </TabNav>
            ))}
            <AddSheet aria-label="Add sheet">+</AddSheet>
            <Tabs role="tablist">
              {tabs.map((name) => (
                <Tab key={name} role="tab" aria-selected={name === "z4"} $active={name === "z4"} $width={tabWidth(name)}>
                  {name}
                </Tab>
              ))}
            </Tabs>
          </TabBar>
        </Document>
        <Splitter>
          <SplitterGrip aria-label="Hide sidebar">
            <Line size={5} box={5}>
              <path d="M0 0l4 2.500L0 5z" fill="#fff" />
            </Line>
          </SplitterGrip>
        </Splitter>
        <Sidebar>
          <SideButton $tall aria-label="Sidebar settings">
            <Icon name="menu" size={18} />
          </SideButton>
          <SideButton $framed aria-label="Properties">
            <Icon name="wrench" />
          </SideButton>
          <SideButton $tall aria-label="Styles">
            <Icon name="text" />
          </SideButton>
          <SideButton aria-label="Gallery">
            <Icon name="gallery" />
          </SideButton>
          <SideButton aria-label="Navigator">
            <Icon name="compass" />
          </SideButton>
          <SideButton $framed $hovered aria-label="Functions">
            <Icon name="fx" />
            <Tooltip role="tooltip">Functions</Tooltip>
          </SideButton>
        </Sidebar>
      </Workspace>

      <StatusBar>
        <StatusField $start>Sheet 12 of 15</StatusField>
        <StatusField />
        <StatusField $start>PageStyle_z4</StatusField>
        <StatusField>English (UK)</StatusField>
        <StatusField />
        <StatusField>
          <Line size={12} box={12}>
            <path d="M0 3h8v6H0z" fill="#8a8a8a" />
            <path d="M9 1h3M9 11h3M10.500 1v10" stroke="#8a8a8a" />
          </Line>
        </StatusField>
        <StatusField>
          <Line size={12} box={12} stroke="#999" d="M9 11H1V1h8v4M4 7l2 2 5-4" />
        </StatusField>
        <StatusField />
        <StatusField>Average: ; Sum: 0</StatusField>
        <ZoomField>
          <button aria-label="Zoom out">−</button>
          <ZoomSlider type="range" aria-label="Zoom" min="0" max="100" defaultValue="48" />
          <button aria-label="Zoom in">+</button>
        </ZoomField>
        <StatusField>100%</StatusField>
      </StatusBar>
      <WindowsTaskBar />
    </Window>
  );
}

export default App;
